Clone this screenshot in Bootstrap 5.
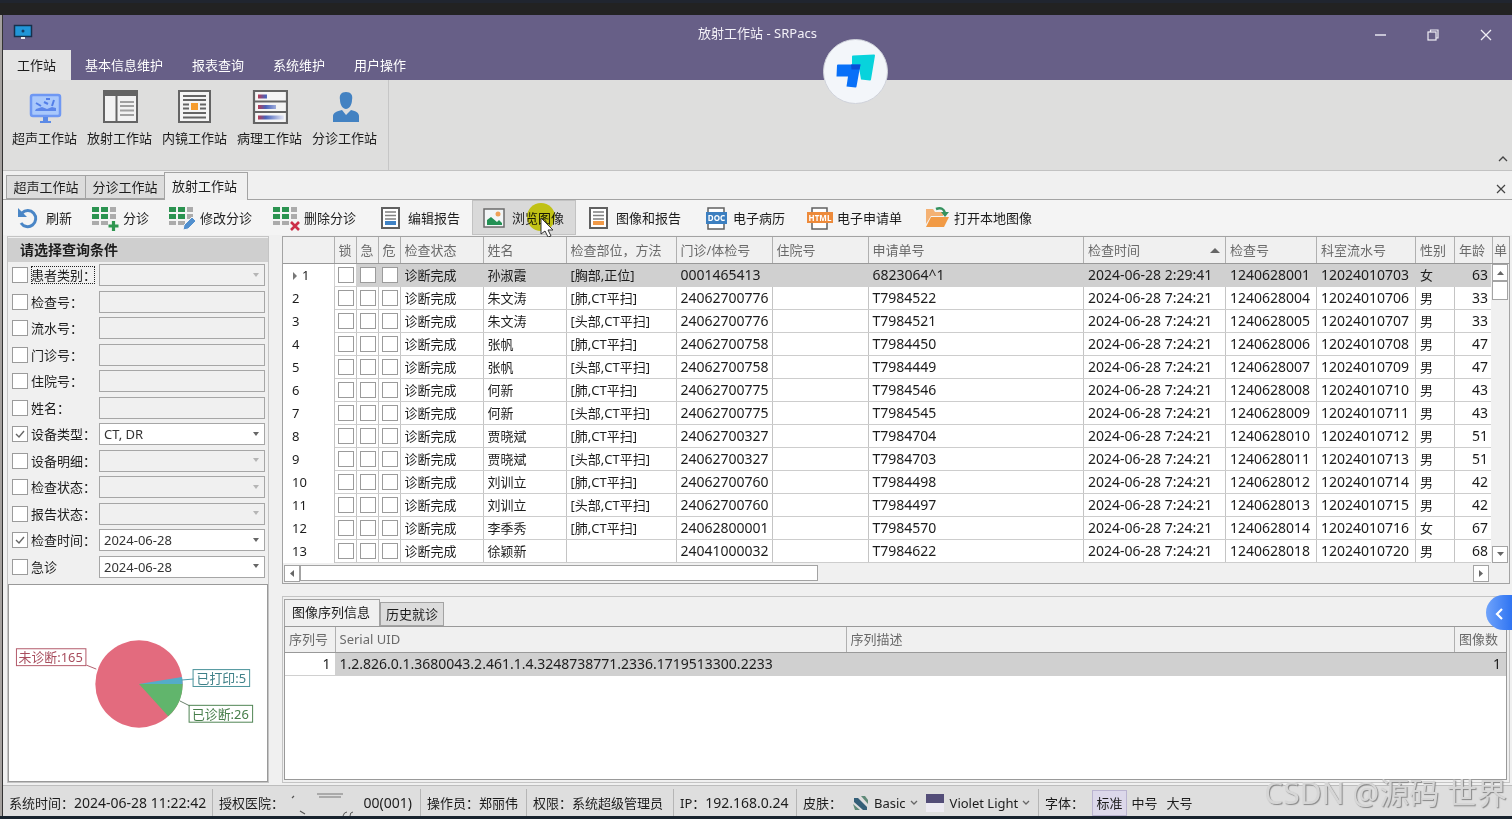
<!DOCTYPE html>
<html lang="zh-CN">
<head>
<meta charset="utf-8">
<meta name="viewport" content="width=device-width, initial-scale=1">
<title>放射工作站 - SRPacs</title>
<link href="https://cdn.jsdelivr.net/npm/bootstrap@5.3.0/dist/css/bootstrap.min.css" rel="stylesheet">
<style>
:root { --line: #a3a3a3; --soft: #c4c4c4; --face: #f0f0f0; --pick: #d0d0d0; }
body { font: 13px/18px "Noto Sans", "Noto Sans CJK SC", sans-serif; color: #1c1c1c; background: #1d252e; }
button { color: inherit; border: 0; background: none; padding: 0; white-space: nowrap; }
.topstrip { height: 15px; background: linear-gradient(#20252f 3px, #222 3px); }
.app { min-height: 100vh; border-bottom: 3px solid #17222d; }
.shell { border-left: 2px solid #a5a19f; box-shadow: inset 1px 0 #333; padding-left: 1px; }
.pane { background: var(--face); }
.titlebar { height: 35px; background: #675f87; color: #f3f1f8; }
.win-btns { top: 0; right: 0; height: 36px; }
.win-btns button { width: 53px; }
.ribbon-tabs { height: 30px; background: #675f87; }
.ribbon-tabs .nav-link { padding: 6px 15px 6px 14px; color: #fff; border-radius: 0; }
.ribbon-tabs .nav-link.active { background: #e4e4e4; color: #1c1c1c; }
.ribbon { height: 91px; background: #dededd; border-bottom: 1px solid #c2c2c2; }
.ribbon-group { padding: 8px 6px 0 4px; border-right: 1px solid #c6c6c6; }
.ribbon-group button { width: 75px; }
.ribbon-group svg { display: block; margin: 0 auto 3px; }
.ribbon-fold { right: 3px; bottom: 4px; }
.doc-tabs { height: 29px; padding: 1px 0 0 3px; border-bottom: 1px solid var(--line); }
.doc-tabs button { height: 24px; background: #dcdcdc; border: 1px solid var(--line); border-right: 0; width: 79px; }
.doc-tabs button.active { height: 28px; width: 84px; padding: 0 3px 2px 0; background: var(--face); border-right: 1px solid var(--line); border-bottom: 0; margin-bottom: -1px; }
.doc-tabs .tab-close { width: 14px; }
.tools { height: 35px; padding-left: 3px; background: #f4f4f4; }
.tools button { padding-left: 8px; width: 104px; }
.tools button svg { margin-right: 4px; flex: none; }
.tools .w-two { width: 77px; }
.tools .w-five { width: 117px; }
.tools .w-six { width: 132px; }
.tools .hot { background: #d9d9d9; border: 1px solid #c2c2c2; padding-left: 7px; }
.pointer-mark { left: 54px; top: 0; pointer-events: none; mix-blend-mode: multiply; }
.pointer-arrow { left: 66px; top: 16px; pointer-events: none; }
.work { padding: 1px 2px 2px 4px; gap: 13px; }
.side { width: 262px; border: 1px solid var(--soft); }
.side h2 { font-size: 14px; line-height: 24px; font-weight: 700; background: #cfcfcf; padding-left: 12px; margin: 1px 0 0; }
.filters { display: grid; grid-auto-rows: 1fr; height: 318px; margin: 0 0 4px; padding: 0 3px 0 4px; }
.filter-row { display: grid; grid-template-columns: 19px 68px 1fr; align-items: center; }
.chk { appearance: none; width: 16px; height: 16px; margin: 0; border: 1px solid #9b9b9b; background: #fff; display: block; }
.chk:checked { background: #fff url("data:image/svg+xml,%3Csvg xmlns='http://www.w3.org/2000/svg' viewBox='0 0 14 14'%3E%3Cpath d='M3 7l3 3 5-6' fill='none' stroke='%23666' stroke-width='1.4'/%3E%3C/svg%3E"); }
.dotted { outline: 1px dotted #222; outline-offset: -1px; }
.field { appearance: none; width: 100%; height: 22px; border: 1px solid #a6a6a6; border-radius: 0; background: #fff; padding: 0 4px; font-size: 13px; line-height: 18px; color: #333; }
select.field { background: #fff url("data:image/svg+xml,%3Csvg xmlns='http://www.w3.org/2000/svg' width='8' height='5'%3E%3Cpath d='M1 0h6L4 4z' fill='%23666'/%3E%3C/svg%3E") no-repeat right 4px center; }
.field:disabled { background-color: var(--face); opacity: 1; }
select.field:disabled { background-image: url("data:image/svg+xml,%3Csvg xmlns='http://www.w3.org/2000/svg' width='8' height='5'%3E%3Cpath d='M1 0h6L4 4z' fill='%23b5b5b5'/%3E%3C/svg%3E"); }
.chart-box { background: #fff; border: 1px solid #999; min-height: 197px; }
.grid-box { border: 1px solid var(--line); }
.cells { table-layout: fixed; width: 100%; border-collapse: collapse; background: #fff; white-space: nowrap; }
.cells th { height: 26px; background: var(--face); color: #6a6a6a; font-weight: 400; border-right: 1px solid #b0b0b0; border-bottom: 1px solid #999; padding: 0 4px; overflow: hidden; }
.cells th.tight { padding: 0 1px; border-right: 0; }
.cells td { height: 23px; padding: 0 4px; border-right: 1px solid var(--soft); border-bottom: 1px solid #cdcdcd; overflow: hidden; }
.cells td.num { font-size: 14px; }
.cells td.rowno { border-bottom: 0; padding-left: 9px; }
.cells .tick { padding: 0 3px; }
.cells tr.picked td { background: var(--pick); border-color: var(--pick); }
.cells tr.picked td.rowno, .cells tr.picked td.lock { background: #fff; }
.vbar { top: 27px; right: 0; bottom: 0; width: 18px; background: var(--face); padding: 0 1px; }
.hbar { height: 20px; padding: 2px 20px 2px 1px; }
.bar-btn { border: 1px solid var(--line); background: #fff; width: 16px; height: 17px; display: flex; align-items: center; justify-content: center; }
.thumb { border: 1px solid var(--line); background: #fff; }
.lower { border: 1px solid var(--soft); margin-top: 12px; padding: 1px 2px 2px 1px; }
.sub-tabs { height: 28px; }
.sub-tabs button { height: 24px; background: #dcdcdc; border: 1px solid var(--line); padding: 0 5px; }
.sub-tabs button.active { height: 27px; background: var(--face); border-bottom: 0; min-width: 96px; padding: 0 7px 2px 5px; }
.lower-body { background: #fff; border: 1px solid #999; min-height: 154px; }
.status { height: 31px; padding-top: 3px; background: #dedede; border-top: 1px solid #bdbdbd; white-space: nowrap; }
.status .seg { display: flex; align-items: center; height: 27px; padding-left: 6px; border-right: 1px solid #b5b5b5; flex: none; }
.status b { font-weight: 400; font-size: 14px; }
.s-time { width: 210px; } .s-hosp { width: 208px; } .s-user { width: 106px; } .s-role { width: 147px; } .s-ip { width: 123px; } .s-skin { width: 242px; }
.size-btn { width: 35px; height: 26px; }
.size-btn.active { background: #dcd8ea; border: 1px solid #bab4d0; }
.logo-pin { left: 823px; top: 39px; }
.side-pull { right: 0; top: 595px; width: 26px; height: 35px; border-radius: 18px 0 0 18px; background: linear-gradient(90deg, #6fa3fb, #2f74f2); }
.stamp { right: 5px; bottom: 8px; font-size: 30px; line-height: 36px; color: #d6d6d6; text-shadow: 1px 1px 1px #888; pointer-events: none; }
</style>
</head>
<body>
<div class="app d-flex flex-column">
  <div class="topstrip"></div>
  <div class="shell d-flex flex-column flex-fill"><div class="pane d-flex flex-column flex-fill">
  <header>
    <div class="titlebar position-relative d-flex align-items-center justify-content-center">
      <svg class="position-absolute start-0 ms-2" width="24" height="18" viewBox="0 0 24 18"><rect x="3.500" y="1.500" width="17" height="11" fill="#2196d8" stroke="#17304c" stroke-width="1.500"/><circle cx="12" cy="7" r="1.500" fill="#153d66"/><path d="M10 13h4v2h-4z" fill="#eee"/></svg>
      <span>放射工作站 - SRPacs</span>
      <div class="win-btns position-absolute d-flex">
        <button aria-label="最小化"><svg width="12" height="12"><path d="M1 6h11" stroke="#e6e4ef" stroke-width="1.500"/></svg></button>
        <button aria-label="还原"><svg width="12" height="12" fill="none" stroke="#f0eef6" stroke-width="1.200"><rect x="1" y="3" width="8" height="8"/><path d="M3.500 3V1H11v8H9"/></svg></button>
        <button aria-label="关闭"><svg width="12" height="12"><path d="M1 1l10 10M11 1L1 11" stroke="#f0eef6" stroke-width="1.300"/></svg></button>
      </div>
    </div>
    <nav class="ribbon-tabs nav flex-nowrap">
      <a class="nav-link active" href="#">工作站</a><a class="nav-link" href="#">基本信息维护</a><a class="nav-link" href="#">报表查询</a><a class="nav-link" href="#">系统维护</a><a class="nav-link" href="#">用户操作</a>
    </nav>
    <div class="ribbon position-relative d-flex">
      <div class="ribbon-group d-flex align-items-start">
        <button><svg width="36" height="38" viewBox="0 0 36 38"><rect x="4" y="7" width="29" height="21" rx="2" fill="#a9c8fb" stroke="#6f98f3" stroke-width="2.500"/><path d="M8 23h21v-3l-4-1-5 2-5-2-6 2z" fill="#5c86ea"/><path d="M19 11h4M17 14l4 2M27 12l-2 6M9 15l5 3" stroke="#527ee8" stroke-width="2"/><path d="M16 29h5v4h3v2H13v-2h3z" fill="#5b8ae6"/></svg>超声工作站</button>
        <button><svg width="36" height="38" viewBox="0 0 36 38" fill="none" stroke="#646464"><rect x="2" y="3" width="33" height="31" fill="#f2f2f2" stroke-width="2"/><path d="M2 5.500h33" stroke-width="5"/><path d="M14.500 8v26" stroke-width="2"/><path d="M18 14h14M18 18h14M18 22.500h14M18 27h14" stroke="#a0a0a0" stroke-width="2"/></svg>放射工作站</button>
        <button><svg width="36" height="38" viewBox="0 0 36 38" fill="none" stroke="#646464" stroke-width="2"><rect x="2" y="3" width="31" height="31" fill="#f4f4f4"/><path d="M6 8h23M6 12h23M6 16.500h6M23 16.500h6M6 20.500h6M23 20.500h6M6 25h23M6 29.500h23" stroke-width="1.800"/><path d="M14 15h7v7h-7z" fill="#f59b2c" stroke="none"/></svg>内镜工作站</button>
        <button><svg width="36" height="38" viewBox="0 0 36 38"><path d="M2 3h33v32H2zM2 13.500h33M2 24h33" fill="#f4f4f4" stroke="#646464" stroke-width="2.200"/><path d="M6 6.500h9v4H6zM6 17h18v4H6zM6 27.500h26v4H6z" fill="url(#fade)"/><defs><linearGradient id="fade"><stop stop-color="#b93a52"/><stop offset=".3" stop-color="#4862ba"/><stop offset="1" stop-color="#e6e8f6"/></linearGradient></defs></svg>病理工作站</button>
        <button><svg width="36" height="38" viewBox="0 0 36 38" fill="#4382c2"><path d="M19 4c5 0 7 3 6 8 0 5-3 9-6 9s-6-4-6-9c-1-5 1-8 6-8z"/><path d="M6 34v-6c0-3 4-5 9-6l4 5 5-5c5 1 8 3 8 6v6z"/></svg>分诊工作站</button>
      </div>
      <button class="ribbon-fold position-absolute" aria-label="折叠功能区"><svg width="12" height="10"><path d="M2 7l4-4 4 4" fill="none" stroke="#444" stroke-width="1.300"/></svg></button>
    </div>
    <div class="doc-tabs d-flex align-items-end">
      <button>超声工作站</button><button>分诊工作站</button><button class="active">放射工作站</button>
      <button class="tab-close ms-auto me-1 border-0 bg-transparent" aria-label="关闭标签"><svg width="10" height="10"><path d="M1 1l8 8M9 1L1 9" stroke="#444" stroke-width="1.200"/></svg></button>
    </div>
  </header>

  <div class="tools d-flex">
    <button class="w-two d-flex align-items-center"><svg width="28" height="28" viewBox="0 0 28 28"><path d="M8 9a8 8 0 1 1-1 10" fill="none" stroke="#4a86c6" stroke-width="3"/><path d="M4 4v9h9z" fill="#4a86c6"/></svg>刷新</button>
    <button class="w-two d-flex align-items-center"><svg width="28" height="28" viewBox="0 0 28 28"><use href="#tiles"/><path d="M22.500 17v10M17.500 22h10" stroke="#2f9650" stroke-width="3.200"/></svg>分诊</button>
    <button class="d-flex align-items-center"><svg width="28" height="28" viewBox="0 0 28 28"><use href="#tiles"/><path d="M15 26l1-5 8-8 4 4-8 8z" fill="#5290ce" stroke="#f4f4f4"/></svg>修改分诊</button>
    <button class="d-flex align-items-center"><svg width="28" height="28" viewBox="0 0 28 28"><use href="#tiles"/><path d="M19 18l8 8M27 18l-8 8" stroke="#cc2f48" stroke-width="2.600"/></svg>删除分诊</button>
    <button class="d-flex align-items-center"><svg width="28" height="28" viewBox="0 0 28 28"><rect x="6" y="4" width="17" height="20" fill="#fff" stroke="#606060" stroke-width="2"/><path d="M9 8h11M9 11.500h11M9 15h11" stroke="#808080" stroke-width="1.500"/><path d="M9 17h11v4H9z" fill="#3f82c4"/></svg>编辑报告</button>
    <button class="hot d-flex align-items-center position-relative"><svg width="28" height="28" viewBox="0 0 28 28"><rect x="4" y="5" width="20" height="18" fill="#f2f5f6" stroke="#6b6b6b" stroke-width="1.500"/><path d="M7 21v-5l4-3 6 5 2-2 3 3v2z" fill="#239154"/><circle cx="18" cy="10" r="2.500" fill="#efa157"/></svg>浏览图像
      <svg class="pointer-mark position-absolute" width="32" height="32"><circle cx="14" cy="16" r="14" fill="#e2e318"/></svg>
      <svg class="pointer-arrow position-absolute" width="14" height="22" viewBox="0 0 14 22"><path d="M2 1v16l4-3 3 6 3-1-3-6h5z" fill="#fff" stroke="#333"/></svg></button>
    <button class="w-five d-flex align-items-center"><svg width="28" height="28" viewBox="0 0 28 28"><rect x="6" y="4" width="17" height="20" fill="#fff" stroke="#606060" stroke-width="2"/><path d="M9 8h11M9 11.500h11M9 15h11" stroke="#808080" stroke-width="1.500"/><path d="M9 17h11v4H9z" fill="#f19a48"/></svg>图像和报告</button>
    <button class="d-flex align-items-center"><svg width="28" height="28" viewBox="0 0 28 28"><rect x="7" y="4" width="16" height="21" fill="#fff" stroke="#606060" stroke-width="1.500"/><path d="M5 8h21v12H5z" fill="#3c7fc0"/><text x="15.500" y="17" text-anchor="middle" font-size="8" font-weight="700" fill="#fff">DOC</text></svg>电子病历</button>
    <button class="w-five d-flex align-items-center"><svg width="28" height="28" viewBox="0 0 28 28"><rect x="7" y="4" width="15" height="21" fill="#fff" stroke="#606060" stroke-width="1.500"/><path d="M2 8h26v11H2z" fill="#ed8a3a"/><text x="15" y="16.500" text-anchor="middle" font-size="8" font-weight="700" fill="#fff">HTML</text></svg>电子申请单</button>
    <button class="w-six d-flex align-items-center"><svg width="28" height="28" viewBox="0 0 28 28"><path d="M4 5h7l2 3h8v4H9L4 20z" fill="#f4b173"/><path d="M9 13h18l-5 10H4z" fill="#f19a45"/><path d="M14 5c5-2 8 0 9 4" fill="none" stroke="#34915e" stroke-width="2.500"/><path d="M19 8h8l-4 5z" fill="#34915e"/></svg>打开本地图像</button>
    <svg width="0" height="0" class="position-absolute"><defs><g id="tiles"><path d="M1 3h7v5H1zM10 3h7v5h-7zM1 10h7v5H1zM10 10h7v5h-7z" fill="#2b9350"/><path d="M19 3h6v5h-6zM19 10h6v5h-6zM1 17h7v4H1zM10 17h7v4h-7z" fill="#ababab"/></g></defs></svg>
  </div>

  <main class="work d-flex flex-fill">
    <aside class="side d-flex flex-column flex-shrink-0">
      <h2>请选择查询条件</h2>
      <form class="filters" id="filters"></form>
      <div class="chart-box flex-fill">
        <svg class="d-block" width="100%" height="195" viewBox="0 0 260 195" font-size="13" role="img" aria-label="诊断统计">
          <circle cx="131" cy="99" r="44" fill="#e36b7e"/>
          <path d="M131 99L174.400 92A44 44 0 0 1 175 99z" fill="#54acc8"/>
          <path d="M131 99H175A44 44 0 0 1 160.500 131.600z" fill="#61b56c"/>
          <path d="M78 80l10 4" stroke="#b0606e"/><path d="M174 95l12-1" stroke="#4f9baa"/><path d="M172 116l10 5" stroke="#68806a"/>
          <g fill="none"><rect x="7.500" y="63.500" width="70" height="17" stroke="#b35a6a"/><rect x="185.500" y="84.500" width="57" height="17" stroke="#49929a"/><rect x="181.500" y="120.500" width="64" height="17" stroke="#4f8453"/></g>
          <g text-anchor="middle"><text x="42" y="77" fill="#a84e5e">未诊断:165</text><text x="214" y="98" fill="#3f8088">已打印:5</text><text x="213" y="134" fill="#477e4a">已诊断:26</text></g>
        </svg>
      </div>
    </aside>

    <section class="d-flex flex-column flex-fill" style="min-width:0">
      <div class="grid-box">
        <div class="position-relative">
          <table class="cells">
            <colgroup><col style="width:51px"><col style="width:22px"><col style="width:22px"><col style="width:22px"><col style="width:83px"><col style="width:83px"><col style="width:110px"><col style="width:96px"><col style="width:96px"><col><col style="width:142px"><col style="width:91px"><col style="width:99px"><col style="width:39px"><col style="width:38px"><col style="width:16px"></colgroup>
            <thead><tr><th></th><th>锁</th><th>急</th><th>危</th><th>检查状态</th><th>姓名</th><th>检查部位，方法</th><th>门诊/体检号</th><th>住院号</th><th>申请单号</th><th><span class="d-flex justify-content-between align-items-center">检查时间<svg width="12" height="6"><path d="M1 6l5-5 5 5z" fill="#666"/></svg></span></th><th>检查号</th><th>科室流水号</th><th>性别</th><th>年龄</th><th class="tight">单</th></tr></thead>
            <tbody id="exams"></tbody>
          </table>
          <div class="vbar position-absolute d-flex flex-column">
            <button class="bar-btn" aria-label="向上"><svg width="7" height="4"><path d="M0 4l3.500-4L7 4z" fill="#666"/></svg></button>
            <div class="thumb" style="height:19px;width:16px"></div>
            <button class="bar-btn mt-auto" aria-label="向下"><svg width="7" height="4"><path d="M0 0l3.500 4L7 0z" fill="#666"/></svg></button>
          </div>
        </div>
        <div class="hbar d-flex">
          <button class="bar-btn flex-shrink-0" aria-label="向左"><svg width="4" height="7"><path d="M4 0L0 3.500 4 7z" fill="#666"/></svg></button>
          <div class="thumb" style="width:43%"></div>
          <button class="bar-btn ms-auto flex-shrink-0" aria-label="向右"><svg width="4" height="7"><path d="M0 0l4 3.500L0 7z" fill="#666"/></svg></button>
        </div>
      </div>
      <div class="lower d-flex flex-column flex-fill">
        <div class="sub-tabs d-flex align-items-end"><button class="active">图像序列信息</button><button>历史就诊</button></div>
        <div class="lower-body flex-fill">
          <table class="cells">
            <colgroup><col style="width:50px"><col style="width:511px"><col><col style="width:51px"></colgroup>
            <thead><tr><th>序列号</th><th>Serial UID</th><th>序列描述</th><th class="border-end-0">图像数</th></tr></thead>
            <tbody><tr class="picked"><td class="num lock text-end">1</td><td class="num">1.2.826.0.1.3680043.2.461.1.4.3248738771.2336.1719513300.2233</td><td></td><td class="num text-end">1</td></tr></tbody>
          </table>
        </div>
      </div>
    </section>
  </main>

  <footer class="status d-flex align-items-center">
    <div class="seg s-time">系统时间：<b>2024-06-28 11:22:42</b></div>
    <div class="seg s-hosp justify-content-between pe-2">授权医院：<svg width="66" height="26"><path d="M26 4h26M28 7h22" stroke="#999" stroke-width="1.500"/><path d="M9 21l5 3M1 8l2-2" stroke="#555" stroke-width="1.200"/><path d="M52 26q1-4 4-4M59 26q0-4 3-4" stroke="#555" fill="none"/></svg><b>00(001)</b></div>
    <div class="seg s-user">操作员：郑丽伟</div>
    <div class="seg s-role">权限：系统超级管理员</div>
    <div class="seg s-ip">IP：<b>192.168.0.24</b></div>
    <div class="seg s-skin">皮肤：
      <button class="d-flex align-items-center ms-2"><svg class="me-1" width="20" height="16"><path d="M4 3h4l9 9v3h-4L4 7z" fill="#345f78"/><path d="M11 1h4l3 4v4zM3 9l7 6H5z" fill="#5f8a78"/></svg>Basic<svg class="ms-1" width="8" height="6"><path d="M1 1l3 3 3-3" fill="none" stroke="#666" stroke-width="1.300"/></svg></button>
      <button class="d-flex align-items-center ms-2"><svg class="me-1" width="20" height="18"><path d="M0 0h18v9H0z" fill="#534d78"/><path d="M0 9h18v9H0z" fill="#eceaf2"/></svg>Violet Light<svg class="ms-1" width="8" height="6"><path d="M1 1l3 3 3-3" fill="none" stroke="#666" stroke-width="1.300"/></svg></button></div>
    <div class="seg border-0">字体：<button class="size-btn active ms-2">标准</button><button class="size-btn">中号</button><button class="size-btn">大号</button></div>
  </footer>
  </div></div>

  <div class="stamp position-fixed">CSDN @源码 世界</div>
  <button class="side-pull position-fixed" aria-label="展开侧栏"><svg width="12" height="16"><path d="M9 3L4 8l5 5" fill="none" stroke="#fff" stroke-width="2.200"/></svg></button>
  <svg class="logo-pin position-fixed" width="66" height="66" viewBox="0 0 66 66"><circle cx="32.500" cy="32.500" r="32" fill="#f3f6fa" stroke="#cfd2da"/><path d="M29 17.500q0-1 1-1l21-1q1 0 1 1l-4 24q0 1-1 1l-9-1-2-12h-7z" fill="#08d3dc"/><path d="M14 26.500q0-1 1-1h22.500l-4 22q0 1-1 1l-9-1 1.500-10H13.500z" fill="#0870f8"/><path d="M28 25.500h9.500l-1 5h-8z" fill="#0a4fd6"/></svg>
</div>

<script>
// label, kind of field, value (an empty value leaves the field disabled), ticked
const filters = [
  ["患者类别：", "select", "", false], ["检查号：", "text", "", false], ["流水号：", "text", "", false], ["门诊号：", "text", "", false],
  ["住院号：", "text", "", false], ["姓名：", "text", "", false], ["设备类型：", "select", "CT, DR", true], ["设备明细：", "select", "", false],
  ["检查状态：", "select", "", false], ["报告状态：", "select", "", false], ["检查时间：", "select", "2024-06-28", true], ["急诊", "select", "2024-06-28", false]
];
document.getElementById("filters").innerHTML = filters.map(([label, kind, value, on], i) => {
  const off = value ? "" : " disabled";
  const field = kind === "select"
    ? `<select class="field" aria-label="${label}"${off}><option>${value}</option></select>`
    : `<input class="field" type="text" aria-label="${label}"${off}>`;
  return `<div class="filter-row"><input class="chk" type="checkbox" id="f${i}"${on ? " checked" : ""}><label for="f${i}" class="text-nowrap overflow-hidden me-1${i ? "" : " dotted"}">${label}</label>${field}</div>`;
}).join("");

const exams = [
  ["孙淑霞", "[胸部,正位]", "0001465413", "6823064^1", "2:29:41", "001", "03", "女", 63],
  ["朱文涛", "[肺,CT平扫]", "24062700776", "T7984522", "7:24:21", "004", "06", "男", 33],
  ["朱文涛", "[头部,CT平扫]", "24062700776", "T7984521", "7:24:21", "005", "07", "男", 33],
  ["张帆", "[肺,CT平扫]", "24062700758", "T7984450", "7:24:21", "006", "08", "男", 47],
  ["张帆", "[头部,CT平扫]", "24062700758", "T7984449", "7:24:21", "007", "09", "男", 47],
  ["何新", "[肺,CT平扫]", "24062700775", "T7984546", "7:24:21", "008", "10", "男", 43],
  ["何新", "[头部,CT平扫]", "24062700775", "T7984545", "7:24:21", "009", "11", "男", 43],
  ["贾晓斌", "[肺,CT平扫]", "24062700327", "T7984704", "7:24:21", "010", "12", "男", 51],
  ["贾晓斌", "[头部,CT平扫]", "24062700327", "T7984703", "7:24:21", "011", "13", "男", 51],
  ["刘训立", "[肺,CT平扫]", "24062700760", "T7984498", "7:24:21", "012", "14", "男", 42],
  ["刘训立", "[头部,CT平扫]", "24062700760", "T7984497", "7:24:21", "013", "15", "男", 42],
  ["李季秀", "[肺,CT平扫]", "24062800001", "T7984570", "7:24:21", "014", "16", "女", 67],
  ["徐颖新", "", "24041000032", "T7984622", "7:24:21", "018", "20", "男", 68]
];
document.getElementById("exams").innerHTML = exams.map(([name, part, visit, order, time, no, serial, sex, age], i) => {
  const box = (t, c = "") => `<td class="tick ${c}"><input class="chk" type="checkbox" aria-label="${t}"></td>`;
  const mark = i ? "" : `<svg class="me-1" width="6" height="8"><path d="M1 0l4 4-4 4z" fill="#777"/></svg>`;
  return `<tr class="${i ? "" : "picked"}"><td class="rowno">${mark}${i + 1}</td>${box("锁", "lock")}${box("急")}${box("危")}<td>诊断完成</td><td>${name}</td><td>${part}</td>`
    + `<td class="num">${visit}</td><td></td><td class="num">${order}</td><td class="num">2024-06-28 ${time}</td><td class="num">1240628${no}</td><td class="num">120240107${serial}</td><td>${sex}</td><td class="num text-end">${age}</td><td></td></tr>`;
}).join("");
</script>
<script src="https://cdn.jsdelivr.net/npm/bootstrap@5.3.0/dist/js/bootstrap.bundle.min.js"></script>
</body>
</html>
